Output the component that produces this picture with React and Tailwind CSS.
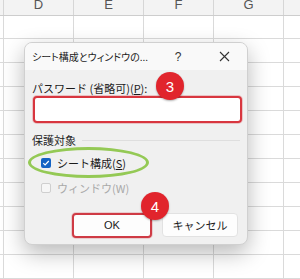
export default function App() {
  const rowHeights = [23, 24, 24, 24, 24, 24, 24, 24, 24, 24, 24];
  return (
    <div className="relative w-[300px] h-[279px] overflow-hidden bg-white font-['Noto_Sans_CJK_JP','Noto_Sans',sans-serif]">
      {/* column header */}
      <div className="flex h-[16px] bg-[#f3f3f3] border-b border-[#cdcdcd]">
        <div className="w-[4px] shrink-0 border-r border-[#d6d6d6]" />
        {['D', 'E', 'F', 'G'].map((c) => (
          <div
            key={c}
            className="w-[70px] shrink-0 border-r border-[#d6d6d6] flex justify-center items-end pb-[4px] text-[13px] leading-none text-[#555] font-['Liberation_Sans',sans-serif]"
          >
            {c}
          </div>
        ))}
        <div className="flex-1" />
      </div>
      {/* grid rows */}
      {rowHeights.map((h, i) => (
        <div key={i} className="flex border-b border-[#dadada]" style={{ height: h }}>
          <div className="w-[4px] shrink-0 border-r border-[#dadada]" />
          {[0, 1, 2, 3].map((c) => (
            <div key={c} className="w-[70px] shrink-0 border-r border-[#dadada]" />
          ))}
          <div className="flex-1" />
        </div>
      ))}

      {/* dialog */}
      <div className="absolute left-[24px] top-[42px] w-[224px] h-[203px] rounded-[8px] bg-[#f0f0f0] border border-[#d0d0d0] shadow-[0_8px_22px_rgba(0,0,0,0.28)] overflow-hidden text-[#1b1b1b]">
        <div className="flex items-center h-[27px] bg-[#f9f9f9]">
          <div className="flex-1 pl-[7px] text-[10px] leading-none whitespace-nowrap [font-feature-settings:'palt']">シート構成とウィンドウの...</div>
          <div className="w-[46px] text-center text-[12px] leading-none font-['Liberation_Sans',sans-serif] text-[#333]">?</div>
          <div className="w-[46px] flex justify-center">
            <svg width="11" height="11" viewBox="0 0 11 11" stroke="#333" strokeWidth="1.1">
              <path d="M1 1L10 10M10 1L1 10" />
            </svg>
          </div>
        </div>
        <div className="pl-[7px] pr-[5px]">
          <div className="mt-[11px] h-[14px] text-[11px] leading-[14px] whitespace-nowrap">
            パスワード (省略可)(<span className="underline">P</span>):
          </div>
          <div className="mt-[1px] ml-[1px] w-[209px] h-[27px] rounded-[4px] border-2 border-[#d8363f] bg-white shadow-[0_0_0_1px_rgba(216,54,63,0.25)]" />
          <div className="mt-[10px] h-[14px] flex items-center gap-[6px]">
            <span className="text-[11px] leading-[14px] whitespace-nowrap">保護対象</span>
            <div className="flex-1 h-px bg-[#dedede] mr-[2px]" />
          </div>
          <div className="mt-[8px] h-[16px] flex items-center pl-[9px] gap-[6px]">
            <div className="w-[10px] h-[10px] rounded-[2px] bg-[#1463c4] flex items-center justify-center">
              <svg width="8" height="8" viewBox="0 0 8 8" fill="none" stroke="white" strokeWidth="1.2">
                <path d="M1.3 4.2L3.1 6L6.8 2" />
              </svg>
            </div>
            <span className="text-[11px] leading-none whitespace-nowrap">
              シート構成(<span className="underline">S</span>)
            </span>
          </div>
          <div className="mt-[9px] h-[16px] flex items-center pl-[9px] gap-[6px]">
            <div className="w-[10px] h-[10px] rounded-[2px] border border-[#cfcfcf] bg-[#f6f6f6]" />
            <span className="text-[11px] leading-none whitespace-nowrap text-[#a9a9a9]">ウィンドウ(W)</span>
          </div>
          <div className="mt-[17px] flex items-start gap-[10px] pl-[40px]">
            <div className="w-[80px] h-[25px] rounded-[4px] border-2 border-[#cf3b45] bg-[#fdfdfd] flex items-center justify-center text-[11px] leading-none font-['Liberation_Sans',sans-serif] shadow-[0_0_0_1px_rgba(207,59,69,0.2)]">
              OK
            </div>
            <div className="w-[76px] h-[24px] rounded-[4px] border border-[#e2e2e2] bg-[#fdfdfd] flex items-center justify-center text-[11px] leading-none">
              キャンセル
            </div>
          </div>
        </div>
      </div>

      {/* annotations */}
      <div className="absolute left-[28px] top-[147px] w-[121px] h-[31px] rounded-[50%] border-[3px] border-[#94c955]" />
      <div className="absolute left-[156px] top-[72px] w-[28px] h-[28px] rounded-full bg-[#e1242c] shadow-[0_1px_2px_rgba(0,0,0,0.3)] flex items-center justify-center text-white text-[15px] leading-none font-['Liberation_Sans',sans-serif]">
        3
      </div>
      <div className="absolute left-[141px] top-[192px] w-[28px] h-[28px] rounded-full bg-[#e1242c] shadow-[0_1px_2px_rgba(0,0,0,0.3)] flex items-center justify-center text-white text-[15px] leading-none font-['Liberation_Sans',sans-serif]">
        4
      </div>
    </div>
  );
}
